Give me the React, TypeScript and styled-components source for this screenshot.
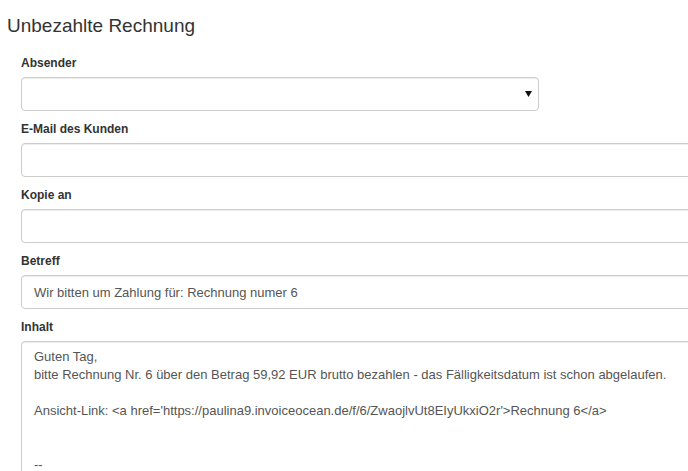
import styled, { createGlobalStyle } from "styled-components";

const GlobalStyle = createGlobalStyle`
  html, body {
    margin: 0;
    padding: 0;
    background: #fff;
    overflow: hidden;
  }
  body {
    font-family: "Liberation Sans", Arial, sans-serif;
    color: #333;
  }
`;

const App: React.FC = () => {
  return (
    <Page>
      <GlobalStyle />
      <Title>Unbezahlte Rechnung</Title>
      <Form>
        <Group>
          <Label>Absender</Label>
          <SelectWrap>
            <Select defaultValue="">
              <option value=""></option>
            </Select>
            <Caret viewBox="0 0 7 6" width="7" height="6">
              <path d="M0 0 H7 L3.5 6 Z" fill="#111" />
            </Caret>
          </SelectWrap>
        </Group>
        <Group>
          <Label>E-Mail des Kunden</Label>
          <Input type="text" />
        </Group>
        <Group>
          <Label>Kopie an</Label>
          <Input type="text" />
        </Group>
        <Group>
          <Label>Betreff</Label>
          <Input type="text" defaultValue="Wir bitten um Zahlung für: Rechnung numer 6" />
        </Group>
        <Group>
          <Label>Inhalt</Label>
          <TextArea
            defaultValue={
              "Guten Tag,\nbitte Rechnung Nr. 6 über den Betrag 59,92 EUR brutto bezahlen - das Fälligkeitsdatum ist schon abgelaufen.\n\nAnsicht-Link: <a href='https://paulina9.invoiceocean.de/f/6/ZwaojlvUt8EIyUkxiO2r'>Rechnung 6</a>\n\n\n--\n"
            }
          />
        </Group>
      </Form>
    </Page>
  );
};

export default App;

const Page = styled.div`
  padding: 15px 0 0 7px;
  width: 760px;
`;

const Title = styled.h3`
  margin: 0 0 19px 0;
  font-size: 19px;
  font-weight: normal;
  line-height: 22px;
  color: #333;
`;

const Form = styled.div`
  display: flex;
  flex-direction: column;
  gap: 11px;
  padding-left: 14px;
`;

const Group = styled.div`
  display: flex;
  flex-direction: column;
`;

const Label = styled.label`
  font-size: 12px;
  font-weight: bold;
  line-height: 15px;
  margin-bottom: 6px;
  color: #333;
`;

const fieldBase = `
  box-sizing: border-box;
  border: 1px solid #ccc;
  border-radius: 4px;
  background: #fff;
  box-shadow: inset 0 1px 1px rgba(0, 0, 0, 0.075);
  font-family: "Liberation Sans", Arial, sans-serif;
  font-size: 13px;
  color: #555;
  outline: none;
`;

const SelectWrap = styled.div`
  position: relative;
  width: 518px;
`;

const Select = styled.select`
  ${fieldBase}
  width: 100%;
  height: 34px;
  appearance: none;
  padding: 6px 12px;
`;

const Caret = styled.svg`
  position: absolute;
  right: 7px;
  top: 14px;
  pointer-events: none;
`;

const Input = styled.input`
  ${fieldBase}
  width: 720px;
  height: 34px;
  padding: 6px 12px;
`;

const TextArea = styled.textarea`
  ${fieldBase}
  width: 720px;
  height: 200px;
  padding: 6px 12px;
  line-height: 18px;
  resize: none;
  overflow: hidden;
`;
